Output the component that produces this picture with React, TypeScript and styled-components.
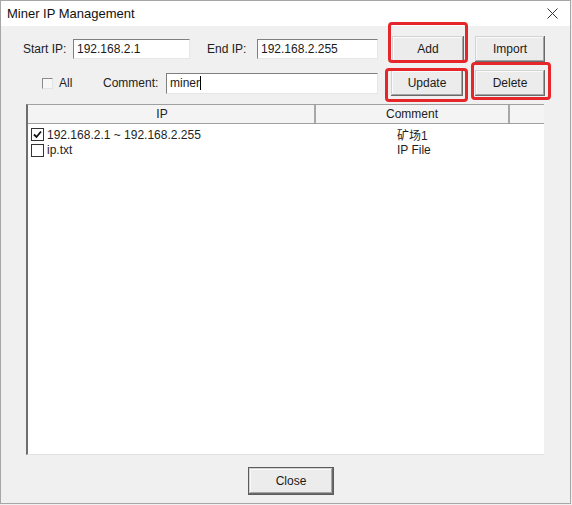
import React from "react";
import styled, { createGlobalStyle } from "styled-components";

const Global = createGlobalStyle`
  html, body { margin: 0; padding: 0; background: #f0f0f0; }
  body { font-family: "Liberation Sans", Arial, sans-serif; font-size: 12px; color: #1e1e1e; }
  * { box-sizing: border-box; }
`;

const Window = styled.div`
  width: 571px;
  height: 504px;
  border: 1px solid #a6a6a6;
  background: #f0f0f0;
  display: flex;
  flex-direction: column;
`;

const TitleBar = styled.div`
  height: 25px;
  background: #ffffff;
  display: flex;
  align-items: center;
  justify-content: space-between;
  padding: 0 12px 0 6px;
`;

const Title = styled.span`
  font-family: "Liberation Sans", Arial, sans-serif;
  font-size: 13px;
  color: #111;
`;

const CloseX = styled.svg`
  width: 11px;
  height: 11px;
`;

const Body = styled.div`
  flex: 1;
  display: flex;
  flex-direction: column;
  padding-top: 10px;
`;

const Row = styled.div`
  height: 26px;
  display: flex;
  align-items: center;
  margin-top: ${(p: { $mt?: number }) => p.$mt ?? 0}px;
`;

const Label = styled.span<{ $ml?: number; $w: number }>`
  margin-left: ${(p) => p.$ml ?? 0}px;
  width: ${(p) => p.$w}px;
  flex: none;
  white-space: nowrap;
  color: #222;
`;

const Input = styled.div<{ $w: number; $h?: number }>`
  width: ${(p) => p.$w}px;
  height: ${(p) => p.$h ?? 20}px;
  flex: none;
  background: #fff;
  border-top: 1px solid #7f7f7f;
  border-left: 1px solid #7f7f7f;
  border-right: 1px solid #e6e6e6;
  border-bottom: 1px solid #e6e6e6;
  padding-left: 3px;
  display: flex;
  align-items: center;
  color: #1a1a1a;
`;

const Caret = styled.span`
  display: inline-block;
  width: 1px;
  height: 14px;
  background: #000;
`;

type Inset = [number, number, number, number];

const Button = styled.button<{ $ml?: number; $w: number; $h?: number; $hl?: Inset; $default?: boolean }>`
  position: relative;
  margin: 0 0 0 ${(p) => p.$ml ?? 0}px;
  width: ${(p) => p.$w}px;
  height: ${(p) => p.$h ?? 26}px;
  flex: none;
  padding: 0;
  font-family: "Liberation Sans", Arial, sans-serif;
  font-size: 12px;
  color: #1a1a1a;
  background: #ececec;
  border: ${(p) => (p.$default ? "1px solid #5c5c5c" : "none")};
  box-shadow: inset -1px -1px #6a6a6a, inset 1px 1px #d2d2d2, inset -2px -2px #a4a4a4,
    inset 2px 2px #fafafa;
  &::after {
    content: "";
    display: ${(p) => (p.$hl ? "block" : "none")};
    position: absolute;
    top: ${(p) => (p.$hl ? p.$hl[0] : 0)}px;
    right: ${(p) => (p.$hl ? p.$hl[1] : 0)}px;
    bottom: ${(p) => (p.$hl ? p.$hl[2] : 0)}px;
    left: ${(p) => (p.$hl ? p.$hl[3] : 0)}px;
    border: 3px solid #e5262b;
    border-radius: 4px;
    pointer-events: none;
  }
`;

const SmallCheck = styled.span<{ $ml?: number }>`
  margin-left: ${(p) => p.$ml ?? 0}px;
  width: 11px;
  height: 11px;
  flex: none;
  background: #f7f7f7;
  border-top: 1px solid #8a8a8a;
  border-left: 1px solid #8a8a8a;
  border-right: 1px solid #e4e4e4;
  border-bottom: 1px solid #e4e4e4;
`;

const List = styled.div`
  margin: 8px 0 0 25px;
  width: 518px;
  height: 351px;
  background: #fff;
  border-left: 2px solid #6e6e6e;
  border-top: 1px solid #a0a0a0;
  border-bottom: 1px solid #e2e2e2;
  display: flex;
  flex-direction: column;
`;

const Header = styled.div`
  height: 19px;
  display: grid;
  grid-template-columns: 288px 194px 1fr;
  background: #f4f4f4;
  border-bottom: 1px solid #a0a0a0;
`;

const HeaderCell = styled.div<{ $pr?: number; $last?: boolean }>`
  display: flex;
  align-items: center;
  justify-content: center;
  padding-right: ${(p) => p.$pr ?? 0}px;
  border-right: ${(p) => (p.$last ? "none" : "2px solid #a8a8a8")};
  color: #222;
`;

const Rows = styled.div`
  padding-top: 2px;
  display: flex;
  flex-direction: column;
`;

const ItemRow = styled.div`
  height: 16px;
  display: grid;
  grid-template-columns: 288px 1fr;
  align-items: center;
`;

const IpCell = styled.div`
  display: flex;
  align-items: center;
  padding-left: 3px;
  gap: 3px;
  white-space: nowrap;
`;

const CommentCell = styled.div`
  padding-left: 81px;
  font-family: "Liberation Sans", "Noto Sans CJK SC", sans-serif;
  white-space: nowrap;
`;

const ListCheck = styled.span`
  width: 13px;
  height: 13px;
  flex: none;
  border: 1px solid #333;
  background: #fff;
  display: flex;
  align-items: center;
  justify-content: center;
`;

const Footer = styled.div`
  margin-top: 12px;
  padding-left: 247px;
  display: flex;
`;

const items = [
  { ip: "192.168.2.1 ~ 192.168.2.255", comment: "矿场1", checked: true },
  { ip: "ip.txt", comment: "IP File", checked: false },
];

export default function App() {
  return (
    <>
      <Global />
      <Window>
        <TitleBar>
          <Title>Miner IP Management</Title>
          <CloseX viewBox="0 0 11 11">
            <path d="M0.5 0.5 L10.5 10.5 M10.5 0.5 L0.5 10.5" stroke="#333" strokeWidth="1" fill="none" />
          </CloseX>
        </TitleBar>
        <Body>
          <Row>
            <Label $ml={22} $w={50}>Start IP:</Label>
            <Input $w={117}>192.168.2.1</Input>
            <Label $ml={17} $w={50}>End IP:</Label>
            <Input $w={121}>192.168.2.255</Input>
            <Button $ml={14} $w={72} $hl={[-14, -4, -1, -4]}>Add</Button>
            <Button $ml={11} $w={70}>Import</Button>
          </Row>
          <Row $mt={8}>
            <SmallCheck $ml={41} />
            <Label $ml={6} $w={44}>All</Label>
            <Label $w={63}>Comment:</Label>
            <Input $w={212} $h={21}>
              miner
              <Caret />
            </Input>
            <Button $ml={13} $w={72} $hl={[-2, -5, -6, -6]}>Update</Button>
            <Button $ml={12} $w={70} $hl={[-8, -6, -4, -4]}>Delete</Button>
          </Row>
          <List>
            <Header>
              <HeaderCell $pr={18}>IP</HeaderCell>
              <HeaderCell>Comment</HeaderCell>
              <HeaderCell $last />
            </Header>
            <Rows>
              {items.map((it) => (
                <ItemRow key={it.ip}>
                  <IpCell>
                    <ListCheck>
                      {it.checked && (
                        <svg width="9" height="9" viewBox="0 0 9 9">
                          <path d="M1 4.5 L3.5 7 L8 1.5" stroke="#111" strokeWidth="1.8" fill="none" />
                        </svg>
                      )}
                    </ListCheck>
                    {it.ip}
                  </IpCell>
                  <CommentCell>{it.comment}</CommentCell>
                </ItemRow>
              ))}
            </Rows>
          </List>
          <Footer>
            <Button $w={86} $h={28} $default>Close</Button>
          </Footer>
        </Body>
      </Window>
    </>
  );
}
